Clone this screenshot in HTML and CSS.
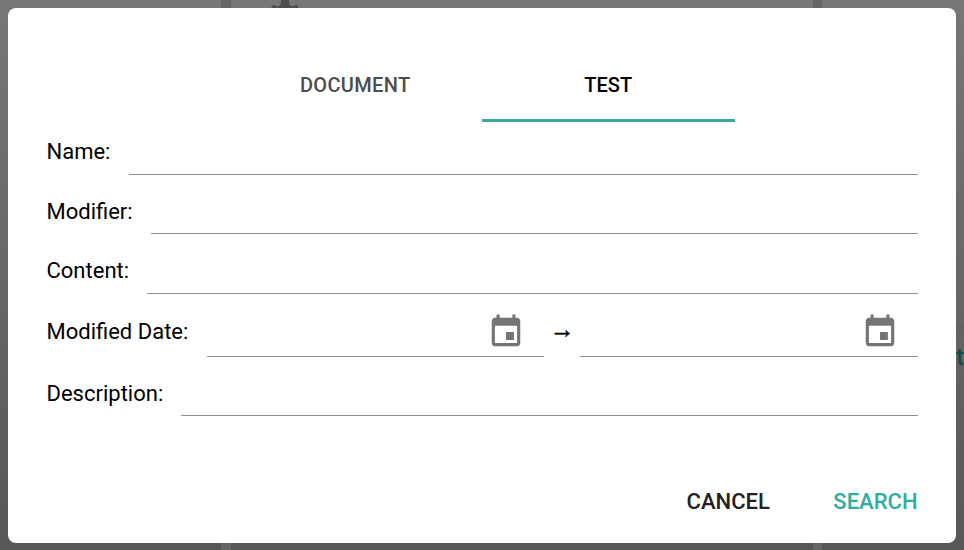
FILE: index.html
```html
<!DOCTYPE html>
<html lang="en">
<head>
    <meta charset="UTF-8">
    <title>Search</title>
    <link rel="stylesheet" href="styles.css">
</head>
<body>
    <!-- page behind the overlay -->
    <svg class="behind-gear" viewBox="0 0 24 24"><path d="M19.14 12.94c.04-.3.06-.61.06-.94 0-.32-.02-.64-.07-.94l2.03-1.58c.18-.14.23-.41.12-.61l-1.92-3.32c-.12-.22-.37-.29-.59-.22l-2.39.96c-.5-.38-1.03-.7-1.62-.94l-.36-2.54c-.04-.24-.24-.41-.48-.41h-3.84c-.24 0-.43.17-.47.41l-.36 2.54c-.59.24-1.13.57-1.62.94l-2.39-.96c-.22-.08-.47 0-.59.22L2.74 8.87c-.12.21-.08.47.12.61l2.03 1.58c-.05.3-.09.63-.09.94s.02.64.07.94l-2.03 1.58c-.18.14-.23.41-.12.61l1.92 3.32c.12.22.37.29.59.22l2.39-.96c.5.38 1.03.7 1.62.94l.36 2.54c.05.24.24.41.48.41h3.84c.24 0 .44-.17.47-.41l.36-2.54c.59-.24 1.13-.56 1.62-.94l2.39.96c.22.08.47 0 .59-.22l1.92-3.32c.12-.22.07-.47-.12-.61l-2.01-1.58z"/></svg>
    <div class="behind-band"></div>
    <span class="behind-letter">t</span>

    <div class="dialog">
        <div class="tabs">
            <a class="tab">DOCUMENT</a>
            <a class="tab active">TEST</a>
        </div>

        <div class="field name-row">
            <label>Name:</label>
            <div class="line"></div>
        </div>
        <div class="field modifier-row">
            <label>Modifier:</label>
            <div class="line"></div>
        </div>
        <div class="field content-row">
            <label>Content:</label>
            <div class="line"></div>
        </div>
        <div class="field date-row">
            <label>Modified Date:</label>
            <div class="line date-line">
                <svg class="cal" viewBox="0 0 24 24"><path d="M17 12h-5v5h5v-5zM16 1v2H8V1H6v2H5c-1.11 0-1.99.9-1.99 2L3 19c0 1.1.89 2 2 2h14c1.1 0 2-.9 2-2V5c0-1.1-.9-2-2-2h-1V1h-2zm3 18H5V8h14v11z"/></svg>
            </div>
            <span class="arrow">→</span>
            <div class="line date-line">
                <svg class="cal" viewBox="0 0 24 24"><path d="M17 12h-5v5h5v-5zM16 1v2H8V1H6v2H5c-1.11 0-1.99.9-1.99 2L3 19c0 1.1.89 2 2 2h14c1.1 0 2-.9 2-2V5c0-1.1-.9-2-2-2h-1V1h-2zm3 18H5V8h14v11z"/></svg>
            </div>
        </div>
        <div class="field desc-row">
            <label>Description:</label>
            <div class="line"></div>
        </div>

        <div class="actions">
            <button class="btn cancel">CANCEL</button>
            <button class="btn search">SEARCH</button>
        </div>
    </div>
</body>
</html>
```

FILE: styles.css
```css
html, body {
    height: 100%;
}

body {
    margin: 0;
    padding: 8px 8px 0;
    box-sizing: border-box;
    overflow: hidden;
    position: relative;
    font-family: Roboto, sans-serif;
    background-color: #676767;
    background-image:
        linear-gradient(to right, transparent 221px, #666 221px, #666 231px, transparent 231px, transparent 813px, #666 813px, #666 822px, transparent 822px),
        linear-gradient(to bottom, #777, #575757);
}

.behind-gear {
    position: absolute;
    left: 265px;
    top: -4px;
    width: 40px;
    height: 40px;
    fill: #4f4f4f;
}

.behind-band {
    position: absolute;
    right: 0;
    top: 325px;
    width: 8px;
    height: 10px;
    background: #616161;
}

.behind-letter {
    position: absolute;
    left: 956px;
    top: 344px;
    font-size: 24px;
    font-weight: 500;
    line-height: 26px;
    color: #0f4f4b;
}

.dialog {
    position: relative;
    width: 948px;
    height: 535px;
    box-sizing: border-box;
    padding: 50px 38px 0 38.5px;
    background: #fff;
    border-radius: 8px;
    display: flex;
    flex-direction: column;
}

.tabs {
    display: flex;
    justify-content: center;
    height: 64px;
    margin-right: 1px;
}

.tab {
    width: 253px;
    height: 64px;
    box-sizing: border-box;
    padding-top: 15px;
    text-align: center;
    font-size: 20px;
    line-height: 24px;
    font-weight: 500;
    letter-spacing: 0.35px;
    color: #4d4d4d;
}

.tab.active {
    color: #000;
    letter-spacing: 0;
    border-bottom: 3px solid #38a89d;
}

.field {
    display: flex;
    align-items: flex-end;
    font-size: 22px;
    line-height: 24px;
    color: #000;
}

.field label {
    padding-bottom: 11.5px;
    margin-right: 18.2px;
}

.line {
    flex: 1;
    height: 41px;
    border-bottom: 1px solid #8f8f8f;
}

.name-row { margin-top: 11px; }
.modifier-row { margin-top: 17px; }
.content-row { margin-top: 18px; }
.date-row { margin-top: 15px; }
.desc-row { margin-top: 17px; }

.modifier-row label,
.desc-row label {
    padding-bottom: 10px;
}

.date-row label {
    padding-bottom: 13px;
}

.date-line {
    height: 47px;
    display: flex;
    justify-content: flex-end;
    padding-right: 19.5px;
}

.cal {
    width: 38px;
    height: 38px;
    margin-top: 3.5px;
    fill: #757575;
}

.arrow {
    width: 36px;
    text-align: center;
    font-family: "Liberation Sans", sans-serif;
    font-size: 25px;
    font-weight: 700;
    -webkit-text-stroke: 0.5px #000;
    padding-bottom: 16px;
}

.actions {
    display: flex;
    justify-content: flex-end;
    gap: 63.5px;
    padding-right: 0.5px;
    margin-top: 73px;
}

.btn {
    padding: 0;
    border: 0;
    background: none;
    font-family: Roboto, sans-serif;
    font-size: 22px;
    line-height: 26px;
    font-weight: 500;
}

.cancel { color: #222; }
.search { color: #2fada1; }
```
